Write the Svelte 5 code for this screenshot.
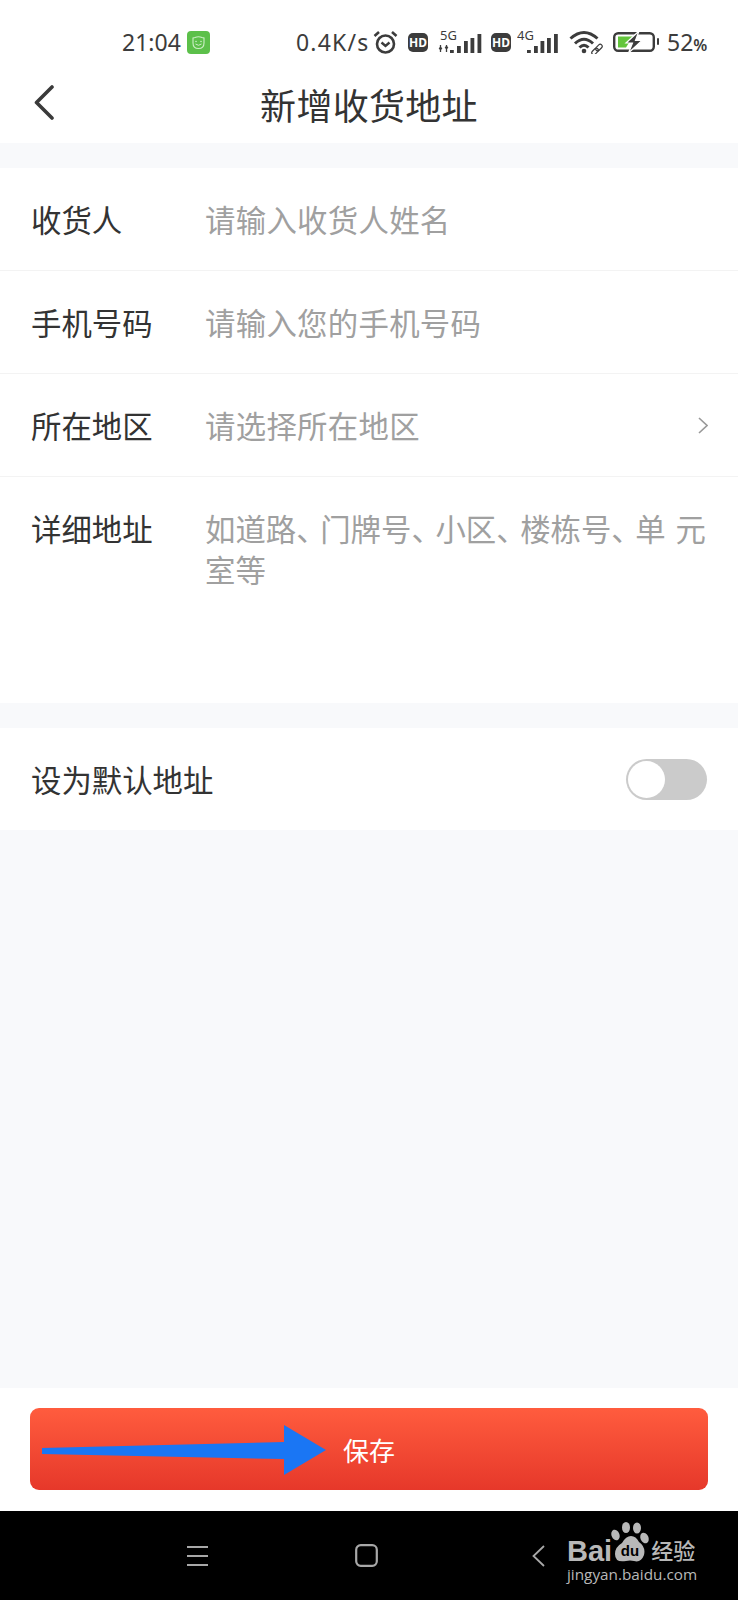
<script>
  const rows = [
    { label: '收货人', hint: '请输入收货人姓名' },
    { label: '手机号码', hint: '请输入您的手机号码' },
    { label: '所在地区', hint: '请选择所在地区', arrow: true }
  ];
  const parts = ['如道路', '门牌号', '小区', '楼栋号'];
  const bars5 = [[12, 3], [19, 7], [26, 12], [32.5, 15], [39.5, 19]];
  const bars4 = [[10, 3], [17, 7], [23.5, 12], [30, 15], [37, 19]];
</script>

<div class="page">
  <header class="status">
    <span class="time">21:04</span>
    <svg class="app-icon" viewBox="0 0 23 23">
      <rect width="23" height="23" rx="4" fill="#5cc04a" />
      <path d="M6 7 L8 6.500 Q11.500 5 15 6.500 L17 7 L17 12 Q17 17.500 11.500 17.500 Q6 17.500 6 12 Z" fill="none" stroke="#cdeec6" stroke-width="1.100" />
      <path d="M8.500 13 Q11.500 15.500 14.500 13" fill="none" stroke="#cdeec6" stroke-width="1" />
      <circle cx="9" cy="10.500" r="0.800" fill="#cdeec6" />
      <circle cx="14" cy="10.500" r="0.800" fill="#cdeec6" />
    </svg>
    <span class="speed">0.4K/s</span>
    <svg class="alarm" viewBox="0 0 25 25" fill="none" stroke="#3c3c3c">
      <circle cx="12.500" cy="14" r="8.500" stroke-width="2.600" />
      <path d="M8.500 12.500 L12.500 16 L16.500 12.500" stroke-width="2.400" />
      <path d="M1.500 6 L6 2 M23.500 6 L19 2" stroke-width="2.600" />
    </svg>
    <span class="hd first">HD</span>
    <svg class="signal five" viewBox="0 -5 44 33">
      <text x="2" y="9" class="net">5G</text>
      <path d="M1 17 H4 L2.500 19 Z M7 17 H10 L8.500 15 Z" fill="#3c3c3c" stroke="#3c3c3c" />
      <path d="M2.500 14 V21 M8.500 14 V21" stroke="#3c3c3c" stroke-width="1.300" />
      {#each bars5 as [x, h]}
        <rect {x} y={22 - h} width="3.800" height={h} fill="#3c3c3c" />
      {/each}
    </svg>
    <span class="hd second">HD</span>
    <svg class="signal four" viewBox="0 -5 42 33">
      <text x="0" y="9" class="net">4G</text>
      {#each bars4 as [x, h]}
        <rect {x} y={22 - h} width="3.800" height={h} fill="#3c3c3c" />
      {/each}
    </svg>
    <svg class="wifi" viewBox="0 0 34 24" fill="none" stroke="#3c3c3c" stroke-width="3">
      <path d="M1.500 8.500 Q15 -3.500 28.500 8.500" />
      <path d="M6 13.500 Q15 5 24 13.500" />
      <path d="M10.500 17.500 Q15 13 19.500 17.500" />
      <circle cx="15" cy="21" r="2.300" fill="#3c3c3c" stroke="none" />
      <g stroke-width="1.200" transform="rotate(-45 28 19.500)">
        <rect x="21.500" y="17.500" width="7.500" height="4" rx="2" />
        <rect x="27" y="17.500" width="7.500" height="4" rx="2" />
      </g>
    </svg>
    <svg class="battery" viewBox="0 -1 46 22">
      <rect x="1.200" y="1.200" width="39.600" height="17.600" rx="4" fill="none" stroke="#3c3c3c" stroke-width="2.400" />
      <path d="M5 4.500 H20 L13 15.500 H5 Z" fill="#63c53c" />
      <path d="M26 -1 L13 11 H19.500 L15.500 21 L29 8.500 H22.500 Z" fill="#3c3c3c" stroke="#fff" stroke-width="1.200" />
      <rect x="44" y="6" width="2" height="7" rx="1" fill="#3c3c3c" />
    </svg>
    <span class="level">52<small>%</small></span>
  </header>

  <nav class="bar">
    <svg class="back" viewBox="0 0 20 35" fill="none">
      <path d="M18 2 L2.500 17.500 L18 33" stroke="#3a3a3a" stroke-width="3.600" stroke-linecap="round" stroke-linejoin="round" />
    </svg>
    <h1>新增收货地址</h1>
  </nav>

  <section class="card">
    {#each rows as row}
      <div class="row">
        <span class="label">{row.label}</span>
        <span class="hint">{row.hint}</span>
        {#if row.arrow}
          <svg class="chev" viewBox="0 0 10 17" fill="none">
            <path d="M1 1 L9 8.500 L1 16" stroke="#999" stroke-width="1.600" />
          </svg>
        {/if}
      </div>
    {/each}
    <div class="row detail">
      <span class="label">详细地址</span>
      <span class="hint">
        {#each parts as part}{part}<span class="dun">、</span>{/each}单 元<br />室等
      </span>
    </div>
  </section>

  <section class="card default">
    <span class="label wide">设为默认地址</span>
    <span class="switch"><span class="knob"></span></span>
  </section>

  <div class="spacer"></div>

  <footer class="actions">
    <button class="save">保存</button>
    <svg class="pointer" viewBox="0 0 290 52">
      <polygon points="0,23 242,17 242,0 284,25 242,50 242,34 0,29" fill="#1a76f4" />
    </svg>
  </footer>

  <div class="keys">
    <svg class="menu" viewBox="0 0 21 20" fill="none" stroke="#a8a8a8" stroke-width="2">
      <path d="M0 1 H21 M0 10 H21 M0 19 H21" />
    </svg>
    <svg class="home" viewBox="0 0 23 23" fill="none">
      <rect x="1.200" y="1.200" width="20.600" height="20.600" rx="4.500" stroke="#a8a8a8" stroke-width="2.200" />
    </svg>
    <svg class="prev" viewBox="0 0 13 22" fill="none">
      <path d="M12 1 L1.500 11 L12 21" stroke="#a8a8a8" stroke-width="1.800" />
    </svg>
    <div class="mark">
      <div class="brand">
        <span class="bai">Bai</span>
        <svg class="paw" viewBox="0 0 40 40">
          <ellipse cx="4.500" cy="13" rx="4" ry="5.500" transform="rotate(-20 4.500 13)" fill="#b8b8b8" />
          <ellipse cx="15" cy="5.500" rx="4" ry="5.500" fill="#b8b8b8" />
          <ellipse cx="26" cy="6" rx="4" ry="5.500" fill="#b8b8b8" />
          <ellipse cx="33.500" cy="16" rx="4" ry="5.500" transform="rotate(-25 33.500 16)" fill="#b8b8b8" />
          <path d="M20 14 Q25 14 28 20 Q35 25 33 33 Q30 41 23 39 Q19 38 15 39 Q4 41 4 32 Q4 25 11 21 Q15 14 20 14 Z" fill="#b8b8b8" />
          <text x="19" y="34" class="du">du</text>
        </svg>
        <span class="jy">经验</span>
      </div>
      <span class="site">jingyan.baidu.com</span>
    </div>
  </div>
</div>

<style>
  :global(body) {
    margin: 0;
  }

  .page {
    width: 738px;
    height: 1600px;
    display: flex;
    flex-direction: column;
    background: #f8f9fb;
    font-family: "Noto Sans CJK SC", "Noto Sans", sans-serif;
    color: #333;
    overflow: hidden;
  }

  .status {
    height: 64px;
    flex: none;
    display: flex;
    align-items: center;
    background: #fff;
    color: #3c3c3c;
    font-family: "Noto Sans", sans-serif;
    font-size: 23px;
    padding: 20px 0 0 122px;
    box-sizing: border-box;
  }

  .time {
    width: 59px;
  }

  .app-icon {
    width: 23px;
    height: 23px;
    margin-left: 6px;
    flex: none;
  }

  .speed {
    margin-left: 86px;
    width: 77px;
    letter-spacing: 1.200px;
  }

  .alarm {
    width: 25px;
    height: 25px;
    flex: none;
  }

  .hd {
    width: 20px;
    height: 19px;
    flex: none;
    background: #3c3c3c;
    color: #fff;
    border-radius: 5px;
    font-size: 12px;
    font-weight: 700;
    line-height: 19px;
    text-align: center;
  }

  .hd.first {
    margin-left: 10px;
  }

  .hd.second {
    margin-left: 9px;
  }

  .signal {
    height: 33px;
    flex: none;
  }

  .signal.five {
    width: 44px;
    margin-left: 10px;
  }

  .signal.four {
    width: 42px;
    margin-left: 6px;
  }

  .net {
    font-family: "Noto Sans", sans-serif;
    font-size: 13px;
    fill: #3c3c3c;
  }

  .wifi {
    width: 34px;
    height: 24px;
    margin-left: 10px;
    flex: none;
  }

  .battery {
    width: 46px;
    height: 22px;
    margin-left: 10px;
    flex: none;
  }

  .level {
    margin-left: 8px;
  }

  .level small {
    font-size: 16px;
    font-weight: 600;
  }

  .bar {
    height: 79px;
    flex: none;
    position: relative;
    display: flex;
    align-items: center;
    justify-content: center;
    background: #fff;
  }

  .back {
    position: absolute;
    left: 34px;
    top: 21px;
    width: 20px;
    height: 35px;
  }

  h1 {
    margin: 0;
    font-size: 36px;
    font-weight: 400;
    color: #333;
    letter-spacing: 0.300px;
  }

  .card {
    margin-top: 25px;
    background: #fff;
    flex: none;
  }

  .row {
    height: 103px;
    display: flex;
    align-items: center;
    padding: 0 31px;
    box-sizing: border-box;
    border-bottom: 1px solid #f3f3f3;
  }

  .label {
    width: 175px;
    flex: none;
    color: #333;
    font-size: 30.400px;
  }

  .label.wide {
    width: auto;
    white-space: nowrap;
  }

  .hint {
    flex: 1;
    color: #a0a0a0;
    font-size: 30.400px;
    letter-spacing: 0.300px;
    margin-left: -1px;
    white-space: nowrap;
  }

  .chev {
    width: 10px;
    height: 17px;
    margin-right: -1px;
  }

  .detail {
    height: 226px;
    align-items: flex-start;
    padding-top: 31px;
    border-bottom: 0;
    line-height: 41px;
  }

  .detail .hint {
    letter-spacing: 0;
    word-spacing: 3px;
  }

  .dun {
    letter-spacing: -6.400px;
  }

  .default {
    height: 102px;
    display: flex;
    align-items: center;
    justify-content: space-between;
    padding: 0 31px;
  }

  .switch {
    width: 81px;
    height: 41px;
    border-radius: 21px;
    background: #cbcbcb;
    display: flex;
    align-items: center;
  }

  .knob {
    width: 37px;
    height: 37px;
    margin-left: 2px;
    border-radius: 50%;
    background: #fff;
  }

  .spacer {
    flex: 1;
  }

  .actions {
    height: 123px;
    flex: none;
    position: relative;
    box-sizing: border-box;
    padding: 20px 30px 0;
    background: #fff;
  }

  .save {
    display: block;
    width: 100%;
    height: 82px;
    border: 0;
    border-radius: 9px;
    background: linear-gradient(#ff5c3e, #e6382a);
    color: #fff;
    font-family: inherit;
    font-size: 26px;
  }

  .pointer {
    position: absolute;
    left: 42px;
    top: 37px;
    width: 290px;
    height: 52px;
  }

  .keys {
    height: 89px;
    flex: none;
    display: flex;
    align-items: center;
    background: #000;
    padding-left: 187px;
    box-sizing: border-box;
  }

  .menu {
    width: 21px;
    height: 20px;
  }

  .home {
    width: 23px;
    height: 23px;
    margin-left: 147px;
  }

  .prev {
    width: 13px;
    height: 22px;
    margin-left: 154px;
  }

  .mark {
    margin-left: 22px;
    margin-bottom: 6px;
    width: 132px;
    display: flex;
    flex-direction: column;
    gap: 3px;
    color: #b8b8b8;
  }

  .brand {
    display: flex;
    align-items: flex-end;
    height: 40px;
  }

  .bai {
    font-family: "Liberation Sans", sans-serif;
    font-weight: 700;
    font-size: 29px;
    line-height: 21px;
  }

  .paw {
    width: 40px;
    height: 40px;
    margin-left: -1px;
    flex: none;
  }

  .du {
    font-family: "Liberation Sans", sans-serif;
    font-size: 15px;
    font-weight: 700;
    fill: #000;
    text-anchor: middle;
  }

  .jy {
    font-size: 22px;
    font-weight: 500;
    line-height: 25px;
    white-space: nowrap;
  }

  .site {
    font-family: "Open Sans", sans-serif;
    font-size: 15.300px;
    line-height: 18px;
    white-space: nowrap;
  }
</style>
